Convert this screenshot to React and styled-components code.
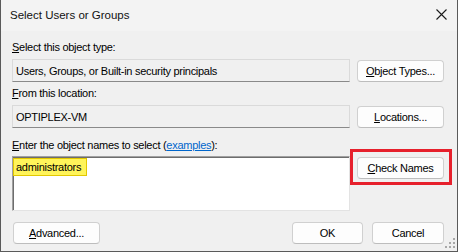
import React from "react";
import styled, { createGlobalStyle } from "styled-components";

const Global = createGlobalStyle`
  html, body { margin: 0; padding: 0; background: #f0f0f0; }
  body { font-family: "Liberation Sans", Arial, sans-serif; }
  * { box-sizing: border-box; }
`;

const Window = styled.div`
  position: relative;
  width: 458px;
  height: 252px;
  background: #f0f0f0;
  border: 1px solid #5a5a5a;
  border-top: none;
  display: flex;
  flex-direction: column;
  font-family: "Liberation Sans", Arial, sans-serif;
  color: #000;
`;

const TitleBar = styled.div`
  height: 31px;
  flex: none;
  background: #f3f3f3;
  display: flex;
  align-items: center;
  justify-content: space-between;
  padding-left: 9px;
  padding-right: 10px;
`;

const Title = styled.div`
  font-size: 11.5px;
  color: #111;
  margin-top: -2px;
`;

const Close = styled.div`
  width: 12px;
  height: 12px;
  display: flex;
  align-items: center;
  justify-content: center;
  margin-top: -2px;
`;

const Body = styled.div`
  flex: 1;
  display: flex;
  flex-direction: column;
  padding: 9px 13px 0 11px;
  letter-spacing: -0.28px;
`;

const Label = styled.div`
  font-size: 11px;
  line-height: 15px;
  height: 15px;
  margin-top: ${(p) => p.$mt || 0}px;
  margin-bottom: ${(p) => p.$mb || 4}px;
  white-space: nowrap;
`;

const Row = styled.div`
  display: grid;
  grid-template-columns: 338px 87px;
  column-gap: 7px;
  align-items: ${(p) => p.$align || "center"};
`;

const ReadField = styled.div`
  height: 23px;
  background: #f0f0f0;
  border: 1px solid #dadada;
  border-bottom-color: #8a8a8a;
  font-size: 11px;
  display: flex;
  align-items: center;
  padding-left: 3px;
  white-space: nowrap;
`;

const NamesBox = styled.div`
  height: 55px;
  background: #fff;
  border: 1px solid #e3e3e3;
  border-top-color: #a0a0a0;
  border-left-color: #a0a0a0;
  box-shadow: inset 1px 1px 0 #6d6d6d;
`;

const Marked = styled.span`
  display: inline-block;
  height: 18px;
  line-height: 16px;
  padding: 0 5px 0 2px;
  font-size: 11px;
  background: #fff45a;
  border: 1.5px solid #e2c800;
`;

const Button = styled.button`
  width: ${(p) => p.$w || 87}px;
  height: 22px;
  background: #fdfdfd;
  border: 1px solid #d0d0d0;
  border-bottom-color: #bdbdbd;
  border-radius: 4px;
  font-family: "Liberation Sans", Arial, sans-serif;
  font-size: 11px;
  letter-spacing: -0.28px;
  color: #000;
  padding: 0;
  u { text-decoration-thickness: 1px; text-underline-offset: 1px; }
`;

const Callout = styled.div`
  position: relative;
  margin-top: 1px;
  &::after {
    content: "";
    position: absolute;
    top: -8px;
    left: -7px;
    right: -8px;
    bottom: -6px;
    border: 3px solid #e6202c;
    pointer-events: none;
  }
`;

const Link = styled.span`
  color: #0066cc;
  text-decoration: underline;
`;

const Footer = styled.div`
  display: flex;
  align-items: center;
  margin-top: 11px;
  padding-left: 1px;
`;

const Spacer = styled.div`
  flex: 1;
`;

const FooterRight = styled.div`
  display: flex;
  gap: 9px;
`;

const Grip = styled.svg`
  position: absolute;
  right: 2px;
  bottom: 3px;
`;

export default function App() {
  return (
    <>
      <Global />
      <Window>
        <TitleBar>
          <Title>Select Users or Groups</Title>
          <Close>
            <svg width="11" height="11" viewBox="0 0 11 11">
              <path d="M0.5 0.5 L10.5 10.5 M10.5 0.5 L0.5 10.5" stroke="#1a1a1a" strokeWidth="1.1" />
            </svg>
          </Close>
        </TitleBar>
        <Body>
          <Label>
            <u>S</u>elect this object type:
          </Label>
          <Row>
            <ReadField>Users, Groups, or Built-in security principals</ReadField>
            <Button>
              <u>O</u>bject Types...
            </Button>
          </Row>
          <Label $mt={4}>
            <u>F</u>rom this location:
          </Label>
          <Row>
            <ReadField>OPTIPLEX-VM</ReadField>
            <Button>
              <u>L</u>ocations...
            </Button>
          </Row>
          <Label $mt={10} $mb={3}>
            <u>E</u>nter the object names to select (<Link>examples</Link>):
          </Label>
          <Row $align="start">
            <NamesBox>
              <Marked>administrators</Marked>
            </NamesBox>
            <Callout>
              <Button>
                <u>C</u>heck Names
              </Button>
            </Callout>
          </Row>
          <Footer>
            <Button $w={87}>
              <u>A</u>dvanced...
            </Button>
            <Spacer />
            <FooterRight>
              <Button $w={71}>OK</Button>
              <Button $w={72}>Cancel</Button>
            </FooterRight>
          </Footer>
        </Body>
        <Grip width="10" height="10" viewBox="0 0 10 10">
          <g fill="#a8a8a8">
            <rect x="8" y="0" width="2" height="2" />
            <rect x="4" y="4" width="2" height="2" />
            <rect x="8" y="4" width="2" height="2" />
            <rect x="0" y="8" width="2" height="2" />
            <rect x="4" y="8" width="2" height="2" />
            <rect x="8" y="8" width="2" height="2" />
          </g>
        </Grip>
      </Window>
    </>
  );
}
